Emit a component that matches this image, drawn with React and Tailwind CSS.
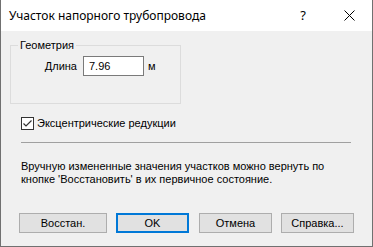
export default function App() {
  return (
    <div className="w-[373px] h-[247px] bg-[#f0f0f0] border-l border-r border-b border-[#707070] flex flex-col font-['Liberation_Sans',Arial,sans-serif] text-[11px] leading-[13px] text-black">
      <div className="h-[31px] bg-white flex items-center shrink-0">
        <div className="flex-1 pl-[8px] text-[12px] font-['Noto_Sans',sans-serif] leading-[16px]">Участок напорного трубопровода</div>
        <div className="w-[46px] h-[31px] flex items-center justify-center text-[13px] font-['Noto_Sans',sans-serif]">?</div>
        <div className="w-[46px] h-[31px] flex items-center justify-center">
          <svg width="11" height="11" viewBox="0 0 11 11">
            <path d="M0.5 0.5 L10.5 10.5 M10.5 0.5 L0.5 10.5" stroke="#000" strokeWidth="1" fill="none" />
          </svg>
        </div>
      </div>
      <div className="flex flex-col pl-[9px]">
        <fieldset className="mt-[8px] w-[171px] h-[65px] border border-[#dcdcdc] p-0 m-0">
          <legend className="ml-[7px] px-[2px] leading-[13px]">Геометрия</legend>
          <div className="flex items-center mt-[4px]">
            <div className="w-[66px] text-right">Длина</div>
            <div className="ml-[6px] w-[61px] h-[20px] border border-[#7a7a7a] bg-white px-[5px] flex items-center">7.96</div>
            <div className="ml-[4px]">м</div>
          </div>
        </fieldset>
        <div className="mt-[13px] ml-[11px] flex items-center">
          <div className="w-[13px] h-[13px] border border-[#333] bg-white flex items-center justify-center">
            <svg width="11" height="11" viewBox="0 0 11 11">
              <path d="M1.5 5.5 L4 8 L9.5 2.5" stroke="#333" strokeWidth="1.2" fill="none" />
            </svg>
          </div>
          <div className="ml-[3px]">Эксцентрические редукции</div>
        </div>
        <div className="mt-[12px] ml-[11px] w-[330px] h-px bg-[#a0a0a0]"></div>
        <div className="mt-[17px] ml-[11px] leading-[13px]">
          <div>Вручную измененные значения участков можно вернуть по</div>
          <div>кнопке 'Восстановить' в их первичное состояние.</div>
        </div>
        <div className="mt-[27px] ml-[9px] flex">
          <div className="w-[88px] h-[20px] bg-[#e1e1e1] border border-[#adadad] flex items-center justify-center">Восстан.</div>
          <div className="ml-[9px] w-[73px] h-[20px] bg-[#e1e1e1] border-2 border-[#0078d7] flex items-center justify-center">OK</div>
          <div className="ml-[10px] w-[73px] h-[20px] bg-[#e1e1e1] border border-[#adadad] flex items-center justify-center">Отмена</div>
          <div className="ml-[9px] w-[73px] h-[20px] bg-[#e1e1e1] border border-[#adadad] flex items-center justify-center">Справка...</div>
        </div>
      </div>
    </div>
  );
}
